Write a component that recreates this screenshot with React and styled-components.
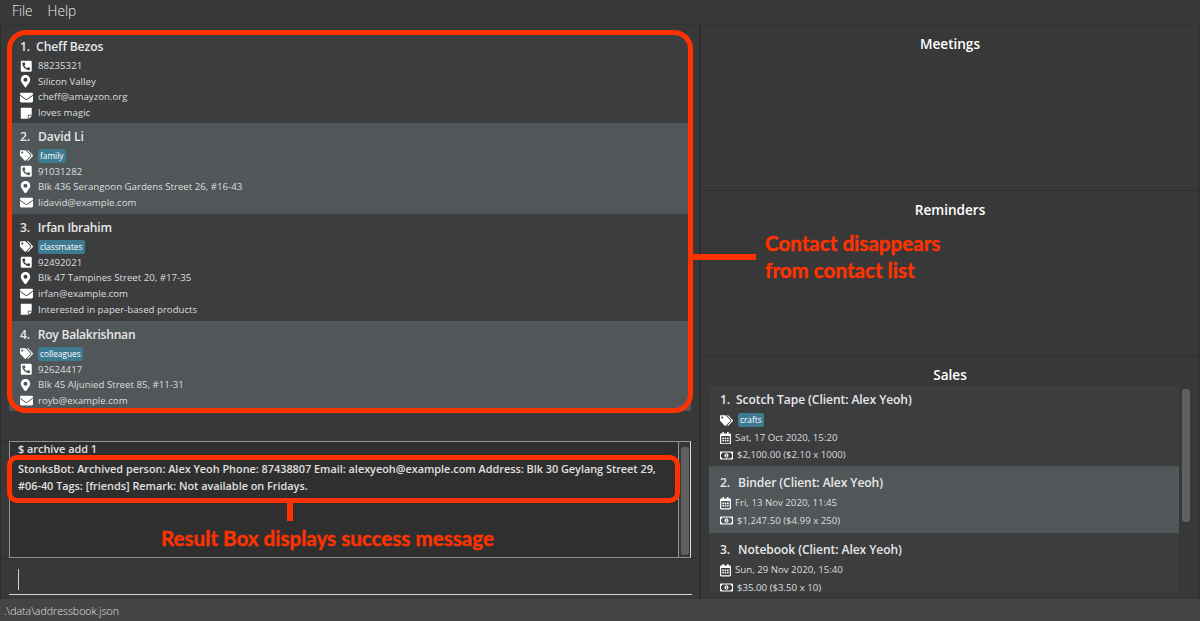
import React from "react";
import styled, { createGlobalStyle } from "styled-components";
import {
  FaPhoneSquareAlt,
  FaMapMarkerAlt,
  FaEnvelope,
  FaStickyNote,
  FaTags,
  FaRegCalendarAlt,
  FaRegMoneyBillAlt,
} from "react-icons/fa";

const GlobalStyle = createGlobalStyle`
  *, *::before, *::after { box-sizing: border-box; }
  body { margin: 0; background: #383838; overflow: hidden; }
`;

const Window = styled.div`
  position: relative;
  display: flex;
  flex-direction: column;
  width: 1200px;
  height: 621px;
  overflow: hidden;
  background: #383838;
  color: #e6e6e6;
  font-family: "Open Sans", "Noto Sans", sans-serif;
  white-space: nowrap;
`;

const MenuBar = styled.nav`
  display: flex;
  gap: 15px;
  height: 25px;
  padding-left: 12px;
  border-bottom: 1px solid #323232;
  font-size: 13.7px;
  font-weight: 300;
  line-height: 22px;
  color: #e9e9e9;
`;

const MenuItem = styled.span`
  color: inherit;
`;

const Main = styled.main`
  display: flex;
  height: 574px;
`;

const LeftColumn = styled.section`
  display: flex;
  flex-direction: column;
  width: 701px;
  border-left: 1px solid #2e2e2e;
  border-right: 2px solid #2e2e2e;
`;

const ContactPane = styled.div`
  height: 416px;
  padding: 8px 8px 0;
`;

const ContactList = styled.div`
  width: 682px;
  height: 378px;
  overflow: hidden;
`;

const Card = styled.article`
  padding: 6px 0 0 11px;
  height: ${(p) => p.$height}px;
  background: ${(p) => (p.$alt ? "#515658" : "#3c3d3f")};
`;

const CardTitle = styled.h3`
  display: flex;
  gap: ${(p) => p.$gap || 7}px;
  margin: 0;
  height: 19px;
  font-size: 12.1px;
  font-weight: 600;
  line-height: 16px;
  letter-spacing: ${(p) => p.$track || -0.09}px;
  color: #e8e8e8;
`;

const Detail = styled.div`
  display: flex;
  align-items: center;
  height: 15.7px;
  font-size: 9.67px;
  line-height: 12px;
  color: #dedede;
`;

const IconSlot = styled.span`
  display: flex;
  align-items: center;
  justify-content: ${(p) => (p.$center ? "center" : "flex-start")};
  width: ${(p) => (p.$center ? 11 : 13)}px;
  margin-right: ${(p) => (p.$center ? 7 : 5)}px;
  color: #fff;
`;

const Tag = styled.span`
  height: 14px;
  margin-left: -0.5px;
  padding: 0 2.5px;
  border-radius: 2px;
  background: #3e7b91;
  color: #fff;
  font-size: 8.3px;
  line-height: 13px;
`;

const ResultPane = styled.div`
  height: 118px;
  padding: 0 8px;
  border-top: 1px solid #2e2e2e;
  border-bottom: 1px solid #2e2e2e;
`;

const ResultBox = styled.div`
  display: flex;
  width: 682px;
  height: 117px;
  margin-top: -1px;
  border: 1px solid #929292;
  border-right-color: #d8d8d8;
  background: #2f2f2f;
`;

const ResultText = styled.div`
  flex: 1;
  padding-left: 8px;
  border-right: 1px solid #929292;
  font-size: 10.9px;
  font-weight: 600;
  line-height: 16.4px;
  letter-spacing: -0.02px;
  color: #e0e0e0;
`;

const ResultLine = styled.p`
  margin: ${(p) => (p.$spaced ? "4px 0 0" : "-1px 0 0")};
  white-space: pre;
`;

const ResultScroll = styled.div`
  width: 11px;
  padding: 5px 1px 3px 2px;
  background: #383838;
`;

const Thumb = styled.div`
  width: ${(p) => p.$width}px;
  height: ${(p) => p.$height}px;
  border-radius: 3px;
  background: #606060;
`;

const CommandPane = styled.div`
  flex: 1;
  padding: 10px 8px 0;
`;

const CommandInput = styled.div`
  width: 683px;
  height: 26px;
  padding-left: 9px;
  border-bottom: 1px solid #d6d6d6;
`;

const Caret = styled.div`
  width: 1px;
  height: 21px;
  background: #d0d0d0;
`;

const RightColumn = styled.aside`
  display: flex;
  flex: 1;
  flex-direction: column;
  border-right: 1px solid #303030;
`;

const SidePane = styled.section`
  height: ${(p) => p.$height}px;
  padding-top: ${(p) => p.$top}px;
  border-bottom: ${(p) => (p.$last ? 0 : 1)}px solid #2d2d2d;
`;

const PaneTitle = styled.h2`
  margin: 0;
  height: 20px;
  font-size: 13.6px;
  font-weight: 600;
  line-height: 20px;
  text-align: center;
  letter-spacing: -0.02px;
  color: #fff;
`;

const SalesBody = styled.div`
  display: flex;
  gap: 3px;
  margin: 1px 0 0 8px;
`;

const SalesList = styled.div`
  width: 470px;
  height: 206px;
  overflow: hidden;
`;

const SaleCard = styled(Card)`
  padding-top: ${(p) => (p.$first ? 5 : 8)}px;
`;

const SaleTitle = styled(CardTitle)`
  height: 20.5px;
  line-height: 17px;
`;

const SaleDetail = styled(Detail)`
  height: 17.5px;
  line-height: 8px;
`;

const SaleIcon = styled(IconSlot)`
  width: ${(p) => (p.$narrow ? 11 : 13)}px;
  margin-right: 4px;
`;

const SalesScroll = styled.div`
  padding-top: 3px;
`;

const StatusBar = styled.footer`
  height: 22px;
  padding-left: 4px;
  background: #444;
  font-size: 10.6px;
  font-weight: 300;
  line-height: 24px;
  color: #e0e0e0;
`;

const Frame = styled.div`
  position: absolute;
  left: 7px;
  top: ${(p) => p.$top}px;
  width: ${(p) => p.$width}px;
  height: ${(p) => p.$height}px;
  border: 5px solid #ff3300;
  border-radius: ${(p) => p.$radius}px;
`;

const Connector = styled.div`
  position: absolute;
  left: ${(p) => p.$left}px;
  top: ${(p) => p.$top}px;
  width: ${(p) => p.$width}px;
  height: ${(p) => p.$height}px;
  background: #ff3300;
`;

const Callout = styled.p`
  position: absolute;
  left: ${(p) => p.$left}px;
  top: ${(p) => p.$top}px;
  margin: 0;
  font-family: Lato, "Open Sans", sans-serif;
  font-size: 20.6px;
  font-weight: 700;
  line-height: 27px;
  letter-spacing: ${(p) => p.$track || 0}px;
  -webkit-text-stroke: 0.35px #ff3300;
  color: #ff3300;
`;

const contacts = [
  {
    name: "Cheff Bezos",
    phone: "88235321",
    address: "Silicon Valley",
    email: "cheff@amayzon.org",
    note: "loves magic",
    height: 90,
  },
  {
    name: "David Li",
    tag: "family",
    phone: "91031282",
    address: "Blk 436 Serangoon Gardens Street 26, #16-43",
    email: "lidavid@example.com",
    height: 91,
  },
  {
    name: "Irfan Ibrahim",
    tag: "classmates",
    phone: "92492021",
    address: "Blk 47 Tampines Street 20, #17-35",
    email: "irfan@example.com",
    note: "Interested in paper-based products",
    height: 107,
    track: -0.25,
  },
  {
    name: "Roy Balakrishnan",
    tag: "colleagues",
    phone: "92624417",
    address: "Blk 45 Aljunied Street 85, #11-31",
    email: "royb@example.com",
    height: 90,
    track: -0.25,
  },
];

const sales = [
  { name: "Scotch Tape (Client: Alex Yeoh)", tag: "crafts", date: "Sat, 17 Oct 2020, 15:20", price: "$2,100.00 ($2.10 x 1000)", height: 80 },
  { name: "Binder (Client: Alex Yeoh)", date: "Fri, 13 Nov 2020, 11:45", price: "$1,247.50 ($4.99 x 250)", height: 67 },
  { name: "Notebook (Client: Alex Yeoh)", date: "Sun, 29 Nov 2020, 15:40", price: "$35.00 ($3.50 x 10)", height: 67 },
];

function ContactCard({ contact, index }) {
  return (
    <Card $alt={index % 2 === 1} $height={contact.height}>
      <CardTitle $gap={index === 0 ? 6 : 8} $track={contact.track}>
        <span>{index + 1}.</span>
        <span>{contact.name}</span>
      </CardTitle>
      {contact.tag && (
        <Detail>
          <IconSlot><FaTags size={13} /></IconSlot>
          <Tag>{contact.tag}</Tag>
        </Detail>
      )}
      <Detail>
        <IconSlot><FaPhoneSquareAlt size={12.5} /></IconSlot>
        <span>{contact.phone}</span>
      </Detail>
      <Detail>
        <IconSlot $center><FaMapMarkerAlt size={12.5} /></IconSlot>
        <span>{contact.address}</span>
      </Detail>
      <Detail>
        <IconSlot><FaEnvelope size={13} /></IconSlot>
        <span>{contact.email}</span>
      </Detail>
      {contact.note && (
        <Detail>
          <IconSlot><FaStickyNote size={12.5} /></IconSlot>
          <span>{contact.note}</span>
        </Detail>
      )}
    </Card>
  );
}

function Sale({ sale, index }) {
  return (
    <SaleCard $alt={index % 2 === 1} $first={index === 0} $height={sale.height}>
      <SaleTitle $gap={index === 0 ? 6 : 8}>
        <span>{index + 1}.</span>
        <span>{sale.name}</span>
      </SaleTitle>
      {sale.tag && (
        <SaleDetail>
          <IconSlot><FaTags size={13} /></IconSlot>
          <Tag>{sale.tag}</Tag>
        </SaleDetail>
      )}
      <SaleDetail>
        <SaleIcon $narrow><FaRegCalendarAlt size={12.5} /></SaleIcon>
        <span>{sale.date}</span>
      </SaleDetail>
      <SaleDetail>
        <SaleIcon><FaRegMoneyBillAlt size={13} /></SaleIcon>
        <span>{sale.price}</span>
      </SaleDetail>
    </SaleCard>
  );
}

export default function App() {
  return (
    <Window>
      <GlobalStyle />
      <MenuBar>
        <MenuItem>File</MenuItem>
        <MenuItem>Help</MenuItem>
      </MenuBar>
      <Main>
        <LeftColumn>
          <ContactPane>
            <ContactList>
              {contacts.map((c, i) => (
                <ContactCard key={c.name} contact={c} index={i} />
              ))}
            </ContactList>
          </ContactPane>
          <ResultPane>
            <ResultBox>
              <ResultText>
                <ResultLine>$ archive add 1</ResultLine>
                <ResultLine $spaced>
                  {"StonksBot: Archived person: Alex Yeoh Phone: 87438807 Email: alexyeoh@example.com Address: Blk 30 Geylang Street 29,\n#06-40 Tags: [friends] Remark: Not available on Fridays."}
                </ResultLine>
              </ResultText>
              <ResultScroll>
                <Thumb $width={8} $height={108} />
              </ResultScroll>
            </ResultBox>
          </ResultPane>
          <CommandPane>
            <CommandInput><Caret /></CommandInput>
          </CommandPane>
        </LeftColumn>
        <RightColumn>
          <SidePane $height={166} $top={9}><PaneTitle>Meetings</PaneTitle></SidePane>
          <SidePane $height={165} $top={9}><PaneTitle>Reminders</PaneTitle></SidePane>
          <SidePane $height={243} $top={9} $last>
            <PaneTitle>Sales</PaneTitle>
            <SalesBody>
              <SalesList>
                {sales.map((s, i) => <Sale key={s.name} sale={s} index={i} />)}
              </SalesList>
              <SalesScroll><Thumb $width={8} $height={133} /></SalesScroll>
            </SalesBody>
          </SidePane>
        </RightColumn>
      </Main>
      <StatusBar>.\data\addressbook.json</StatusBar>

      <Frame $top={30} $width={686} $height={383} $radius={19} />
      <Connector $left={693} $top={254} $width={63} $height={6} />
      <Callout $left={765} $top={230}>
        Contact disappears<br />from contact list
      </Callout>
      <Frame $top={455} $width={673} $height={48} $radius={10} />
      <Connector $left={287} $top={502} $width={6} $height={19} />
      <Callout $left={161} $top={525}>Result Box displays success message</Callout>
    </Window>
  );
}
